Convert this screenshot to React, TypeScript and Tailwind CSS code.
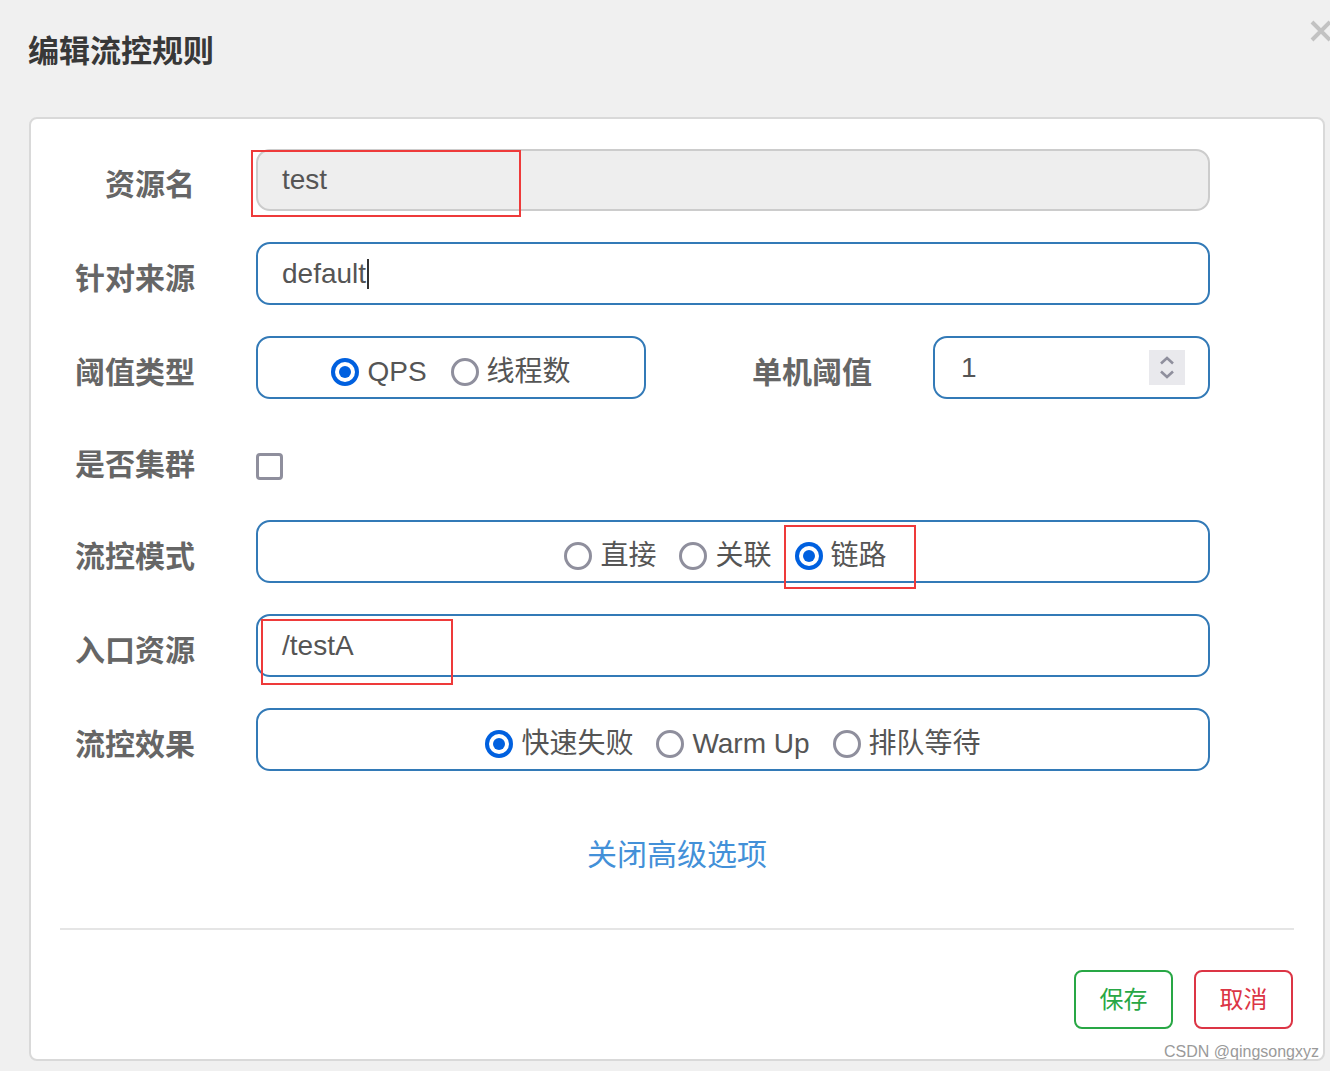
import React from "react";

function Radio({ checked }: { checked?: boolean }) {
  if (checked) {
    return (
      <span className="w-[28px] h-[28px] rounded-full bg-[#0060df] flex items-center justify-center shrink-0">
        <span className="w-[20px] h-[20px] rounded-full bg-white flex items-center justify-center">
          <span className="w-[12px] h-[12px] rounded-full bg-[#0060df]" />
        </span>
      </span>
    );
  }
  return <span className="w-[28px] h-[28px] rounded-full border-[3px] border-[#8f8f9d] bg-white shrink-0" />;
}

function Option({ checked, label, children }: { checked?: boolean; label: string; children?: React.ReactNode }) {
  return (
    <span className="relative flex items-center gap-[8px] h-[30px]">
      <Radio checked={checked} />
      <span className="text-[28px] leading-none text-[#555]">{label}</span>
      {children}
    </span>
  );
}

function Label({ text }: { text: string }) {
  return (
    <div className="w-[164px] shrink-0 text-right pt-[10px] text-[30px] leading-[30px] font-bold text-[#666]">
      {text}
    </div>
  );
}

export default function App() {
  return (
    <div className="relative w-[1330px] h-[1071px] overflow-hidden bg-[#f0f0f0] font-['Liberation_Sans','Noto_Sans_CJK_SC',sans-serif]">
      {/* header */}
      <div className="h-[117px] pl-[28px] pt-[34px]">
        <div className="text-[31px] leading-[36px] font-bold text-[#383838]">编辑流控规则</div>
      </div>
      <svg className="absolute left-[1310px] top-[20px]" width="22" height="22" viewBox="0 0 22 22">
        <path d="M2 2 L20 20 M20 2 L2 20" stroke="#c2c2c2" strokeWidth="4" strokeLinecap="butt" />
      </svg>

      {/* card */}
      <div className="ml-[29px] w-[1296px] h-[944px] bg-white border-2 border-[#d9d9d9] rounded-[8px] flex flex-col pt-[30px]">
        {/* row 1 */}
        <div className="flex items-center h-[62px]">
          <Label text="资源名" />
          <div className="relative ml-[61px] w-[954px] h-[62px] rounded-[14px] border-2 border-[#cccccc] bg-[#eeeeee] flex items-center pl-[24px]">
            <span className="text-[28px] leading-none text-[#555]">test</span>
            <div className="absolute left-[-7px] top-[-1px] w-[270px] h-[67px] border-2 border-[#ee3a3a]" />
          </div>
        </div>

        {/* row 2 */}
        <div className="flex items-center h-[63px] mt-[31px]">
          <Label text="针对来源" />
          <div className="ml-[61px] w-[954px] h-[63px] rounded-[14px] border-2 border-[#337ab7] bg-white flex items-center pl-[24px]">
            <span className="text-[28px] leading-none text-[#555]">default</span>
            <span className="w-[2px] h-[30px] bg-[#333] ml-[1px]" />
          </div>
        </div>

        {/* row 3 */}
        <div className="flex items-center h-[63px] mt-[31px]">
          <Label text="阈值类型" />
          <div className="ml-[61px] w-[954px] h-[63px] flex items-center">
            <div className="w-[390px] h-[63px] rounded-[14px] border-2 border-[#337ab7] flex items-center justify-center gap-[24px] pt-[8px]">
              <Option checked label="QPS" />
              <Option label="线程数" />
            </div>
            <div className="flex-1 text-right pr-[61px] pt-[10px] text-[30px] leading-[30px] font-bold text-[#666]">单机阈值</div>
            <div className="w-[277px] h-[63px] rounded-[14px] border-2 border-[#337ab7] flex items-center justify-between pl-[26px] pr-[23px]">
              <span className="text-[28px] leading-none text-[#555]">1</span>
              <div className="w-[36px] h-[35px] bg-[#e9e9ed] flex flex-col items-center justify-center gap-[5px]">
                <svg width="16" height="9" viewBox="0 0 16 9">
                  <path d="M2 7.5 L8 2 L14 7.5" fill="none" stroke="#8f8f9d" strokeWidth="2.6" />
                </svg>
                <svg width="16" height="9" viewBox="0 0 16 9">
                  <path d="M2 1.5 L8 7 L14 1.5" fill="none" stroke="#8f8f9d" strokeWidth="2.6" />
                </svg>
              </div>
            </div>
          </div>
        </div>

        {/* row 4 */}
        <div className="flex items-center h-[60px] mt-[31px]">
          <Label text="是否集群" />
          <div className="ml-[61px] pt-[13px]">
            <div className="w-[27px] h-[27px] rounded-[4px] border-[3px] border-[#8f8f9d] bg-white" />
          </div>
        </div>

        {/* row 5 */}
        <div className="flex items-center h-[63px] mt-[30px]">
          <Label text="流控模式" />
          <div className="ml-[61px] w-[954px] h-[63px] rounded-[14px] border-2 border-[#337ab7] flex items-center justify-center gap-[23px] pr-[15px] pt-[8px]">
            <Option label="直接" />
            <Option label="关联" />
            <Option checked label="链路">
              <span className="absolute left-[-11px] right-[-29px] top-[-16px] bottom-[-18px] border-2 border-[#ee3a3a]" />
            </Option>
          </div>
        </div>

        {/* row 6 */}
        <div className="flex items-center h-[63px] mt-[31px]">
          <Label text="入口资源" />
          <div className="relative ml-[61px] w-[954px] h-[63px] rounded-[14px] border-2 border-[#337ab7] bg-white flex items-center pl-[24px]">
            <span className="text-[28px] leading-none text-[#555]">/testA</span>
            <div className="absolute left-[3px] top-[3px] w-[192px] h-[66px] border-2 border-[#ee3a3a]" />
          </div>
        </div>

        {/* row 7 */}
        <div className="flex items-center h-[63px] mt-[31px]">
          <Label text="流控效果" />
          <div className="ml-[61px] w-[954px] h-[63px] rounded-[14px] border-2 border-[#337ab7] flex items-center justify-center gap-[23px] pt-[8px]">
            <Option checked label="快速失败" />
            <Option label="Warm Up" />
            <Option label="排队等待" />
          </div>
        </div>

        {/* link */}
        <div className="mt-[64px] flex justify-center">
          <span className="text-[30px] leading-[40px] text-[#4390d8]">关闭高级选项</span>
        </div>

        {/* hr */}
        <div className="mt-[53px] mx-[29px] h-[2px] bg-[#e5e5e5]" />

        {/* buttons */}
        <div className="mt-[40px] flex justify-end gap-[21px] pr-[30px]">
          <button className="w-[99px] h-[59px] rounded-[8px] border-2 border-[#28a745] bg-white text-[24px] leading-none text-[#28a745]">
            保存
          </button>
          <button className="w-[99px] h-[59px] rounded-[8px] border-2 border-[#dc3545] bg-white text-[24px] leading-none text-[#dc3545]">
            取消
          </button>
        </div>
      </div>

      <div className="absolute left-[1164px] top-[1043px] text-[16px] leading-[18px] text-[#9a9a9a]">CSDN @qingsongxyz</div>
    </div>
  );
}
